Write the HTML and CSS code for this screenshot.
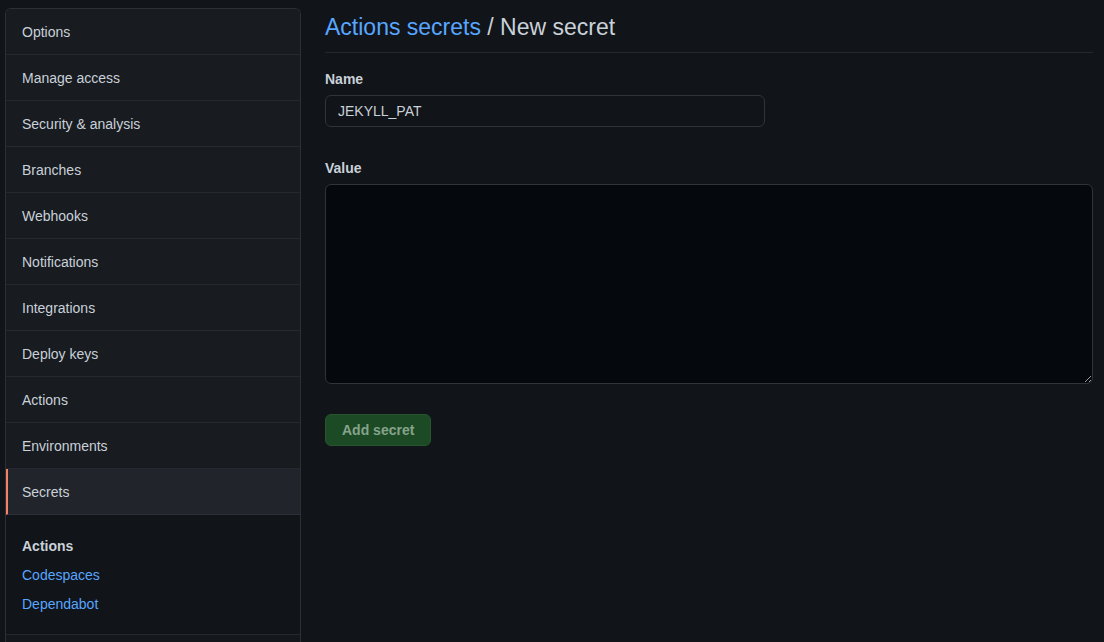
FILE: index.html
```html
<!DOCTYPE html>
<html lang="en">
<head>
<meta charset="utf-8">
<title>New secret</title>
<link rel="stylesheet" href="styles.css">
</head>
<body>
<div class="layout">
  <nav class="sidebar">
    <ul class="menu">
      <li class="menu-item">Options</li>
      <li class="menu-item">Manage access</li>
      <li class="menu-item">Security &amp; analysis</li>
      <li class="menu-item">Branches</li>
      <li class="menu-item">Webhooks</li>
      <li class="menu-item">Notifications</li>
      <li class="menu-item">Integrations</li>
      <li class="menu-item">Deploy keys</li>
      <li class="menu-item">Actions</li>
      <li class="menu-item">Environments</li>
      <li class="menu-item selected">Secrets</li>
    </ul>
    <div class="subsection">
      <div class="sub-heading">Actions</div>
      <a class="sub-link" href="#">Codespaces</a>
      <a class="sub-link" href="#">Dependabot</a>
    </div>
    <div class="sub-rest"></div>
  </nav>
  <main class="content">
    <h2 class="page-title"><a class="title-link" href="#">Actions secrets</a> / New secret</h2>
    <form class="form">
      <label class="label" for="name">Name</label>
      <input class="input" id="name" type="text" value="JEKYLL_PAT">
      <label class="label label-value" for="value">Value</label>
      <textarea class="textarea" id="value"></textarea>
      <div class="actions">
        <button class="btn" type="button" disabled>Add secret</button>
      </div>
    </form>
  </main>
</div>
</body>
</html>
```
FILE: styles.css
```css
* { box-sizing: border-box; }
html, body { margin: 0; padding: 0; }
body {
  background: #111418;
  color: #c9d1d9;
  font-family: "Liberation Sans", Arial, sans-serif;
  font-size: 14px;
  line-height: 21px;
  height: 642px;
  overflow: hidden;
}
.layout {
  display: flex;
  gap: 24px;
  padding: 8px 11px 0 5px;
}
.sidebar {
  width: 296px;
  flex: none;
  border: 1px solid #2c3036;
  border-bottom: none;
  border-radius: 6px 6px 0 0;
  overflow: hidden;
  background: #111418;
}
.menu {
  list-style: none;
  margin: 0;
  padding: 0;
  background: #181b20;
}
.menu-item {
  padding: 13px 16px 11px;
  border-bottom: 1px solid #25292f;
  color: #c9d1d9;
}
.menu-item.selected {
  background: #21252b;
  border-left: 2px solid #f78166;
  padding-left: 14px;
  border-bottom-color: #2c3036;
}
.subsection {
  display: flex;
  flex-direction: column;
  gap: 8px;
  padding: 21px 16px 19px;
  border-bottom: 1px solid #25292f;
}
.sub-heading {
  font-weight: 700;
  color: #c9d1d9;
}
.sub-link {
  color: #58a6ff;
  text-decoration: none;
}
.sub-rest { height: 7px; background: #14171c; }
.content {
  flex: 1;
  min-width: 0;
}
.page-title {
  margin: 0;
  font-size: 23px;
  font-weight: 400;
  line-height: 36px;
  padding-top: 1px;
  padding-bottom: 7px;
  border-bottom: 1px solid #25292f;
  color: #c9d1d9;
}
.title-link {
  color: #58a6ff;
  text-decoration: none;
}
.form {
  display: flex;
  flex-direction: column;
  align-items: flex-start;
  padding-top: 16px;
}
.label {
  font-weight: 700;
  line-height: 20px;
  margin-bottom: 6px;
}
.label-value {
  margin-top: 31px;
  margin-bottom: 6px;
}
.input {
  width: 440px;
  height: 32px;
  padding: 5px 12px;
  background: #111418;
  border: 1px solid #30343a;
  border-radius: 6px;
  color: #c9d1d9;
  font-family: inherit;
  font-size: 14px;
  outline: none;
}
.textarea {
  width: 100%;
  height: 200px;
  background: #05080c;
  border: 1px solid #30343a;
  border-radius: 6px;
  color: #c9d1d9;
  font-family: inherit;
  font-size: 14px;
  padding: 8px 12px;
  resize: vertical;
  outline: none;
  display: block;
}
.actions { margin-top: 30px; }
.btn {
  height: 32px;
  white-space: nowrap;
  background: #1c4a25;
  border: 1px solid #26552e;
  border-radius: 6px;
  color: #86a38b;
  font-family: inherit;
  font-size: 14px;
  font-weight: 700;
  padding: 0 16px;
}
```
